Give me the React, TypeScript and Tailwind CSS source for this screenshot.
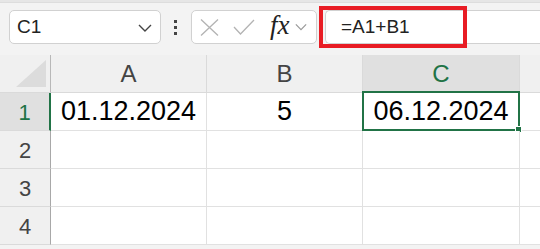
import { ReactNode } from "react";

const cols = ["A", "B", "C"];
const rows: string[][] = [
  ["01.12.2024", "5", "06.12.2024"],
  ["", "", ""],
  ["", "", ""],
  ["", "", ""],
];

function Chevron({ className }: { className?: string }) {
  return (
    <svg width="14" height="8" viewBox="0 0 14 8" className={className}>
      <path d="M1 1 L7 7 L13 1" fill="none" stroke="currentColor" strokeWidth="1.4" />
    </svg>
  );
}

function HeaderCell({ children, active }: { children?: ReactNode; active?: boolean }) {
  return (
    <div
      className={
        "flex items-center justify-center border-r border-b border-[#dadada] text-[24px] " +
        (active ? "bg-[#e0e0e0] text-[#217346]" : "bg-[#f0f0f0] text-[#444]")
      }
    >
      {children}
    </div>
  );
}

export default function App() {
  return (
    <div className="w-[540px] h-[249px] overflow-hidden bg-[#f3f3f3] font-['Liberation_Sans',Arial,sans-serif] relative">
      <div className="h-[3px] bg-[#e6e6e6] border-b border-[#dddddd]" />

      {/* formula bar */}
      <div className="h-[52px] flex items-start pt-[7px]">
        <div className="ml-[9px] w-[152px] h-[34px] bg-white border border-[#d1d1d1] rounded-[5px] flex items-center justify-between pl-[7px] pr-[8px]">
          <span className="text-[19px] text-[#222]">C1</span>
          <Chevron className="text-[#444] mt-[1px]" />
        </div>
        <div className="ml-[13px] mt-[10px] flex flex-col gap-[3px]">
          <div className="w-[3px] h-[3px] bg-[#444]" />
          <div className="w-[3px] h-[3px] bg-[#444]" />
          <div className="w-[3px] h-[3px] bg-[#444]" />
        </div>
        <div className="ml-[14px] w-[126px] h-[34px] bg-white border border-[#d1d1d1] rounded-[5px] flex items-center pl-[8px]">
          <svg width="19" height="17" viewBox="0 0 19 17">
            <path d="M1 0.5 L18 16.5 M18 0.5 L1 16.5" stroke="#b3b3b3" strokeWidth="1.3" fill="none" />
          </svg>
          <svg width="22" height="16" viewBox="0 0 22 16" className="ml-[14px]">
            <path d="M1 8 L7.5 15 L21 1" stroke="#b3b3b3" strokeWidth="1.3" fill="none" />
          </svg>
          <span className="ml-[15px] text-[27px] italic text-[#222] font-['Liberation_Serif',serif] leading-none -mt-[4px]">
            fx
          </span>
          <Chevron className="ml-[5px] text-[#999] w-[12px]" />
        </div>
        <div className="ml-[8px] flex-1 h-[34px] bg-white border-y border-l border-[#d1d1d1] rounded-l-[5px] flex items-center pl-[15px]">
          <span className="text-[19px] text-[#222]">=A1+B1</span>
        </div>
      </div>

      {/* annotation */}
      <div className="absolute left-[319px] top-[6px] w-[148px] h-[42px] border-[4px] border-[#e81c24]" />

      {/* sheet */}
      <div className="grid grid-cols-[51px_156px_156px_157px_1fr] grid-rows-[38px_38px_38px_38px_38px_38px]">
        <div className="border-r border-b border-[#b8b8b8] border-b-[#dadada] bg-[#f0f0f0] flex items-end justify-end pr-[4px] pb-[5px]">
          <svg width="30" height="27" viewBox="0 0 30 27">
            <path d="M30 0 L30 27 L0 27 Z" fill="#dcdcdc" />
          </svg>
        </div>
        {cols.map((c) => (
          <HeaderCell key={c} active={c === "C"}>
            {c}
          </HeaderCell>
        ))}
        <div className="bg-[#f0f0f0] border-b border-[#dadada]" />

        {rows.map((r, i) => (
          <div key={i} className="contents">
            <div
              className={
                "flex items-center justify-center border-b border-[#dadada] text-[22px] pt-[2px] " +
                (i === 0
                  ? "bg-[#e0e0e0] text-[#217346] border-r-2 border-r-[#217346]"
                  : "bg-[#f0f0f0] text-[#444] border-r border-r-[#a8a8a8]")
              }
            >
              {i + 1}
            </div>
            {r.map((v, j) => (
              <div
                key={j}
                className="relative bg-white border-r border-b border-[#e1e1e1] flex items-center justify-center text-[27px] text-black"
              >
                {v}
                {i === 0 && j === 2 && (
                  <div className="absolute -left-[1px] -top-[2px] -right-[1px] -bottom-[1px] border-2 border-[#217346]">
                    <div className="absolute -right-[4px] -bottom-[4px] w-[7px] h-[7px] bg-[#217346] border border-white" />
                  </div>
                )}
              </div>
            ))}
            <div className="bg-white border-b border-[#e1e1e1]" />
          </div>
        ))}
      </div>
    </div>
  );
}
